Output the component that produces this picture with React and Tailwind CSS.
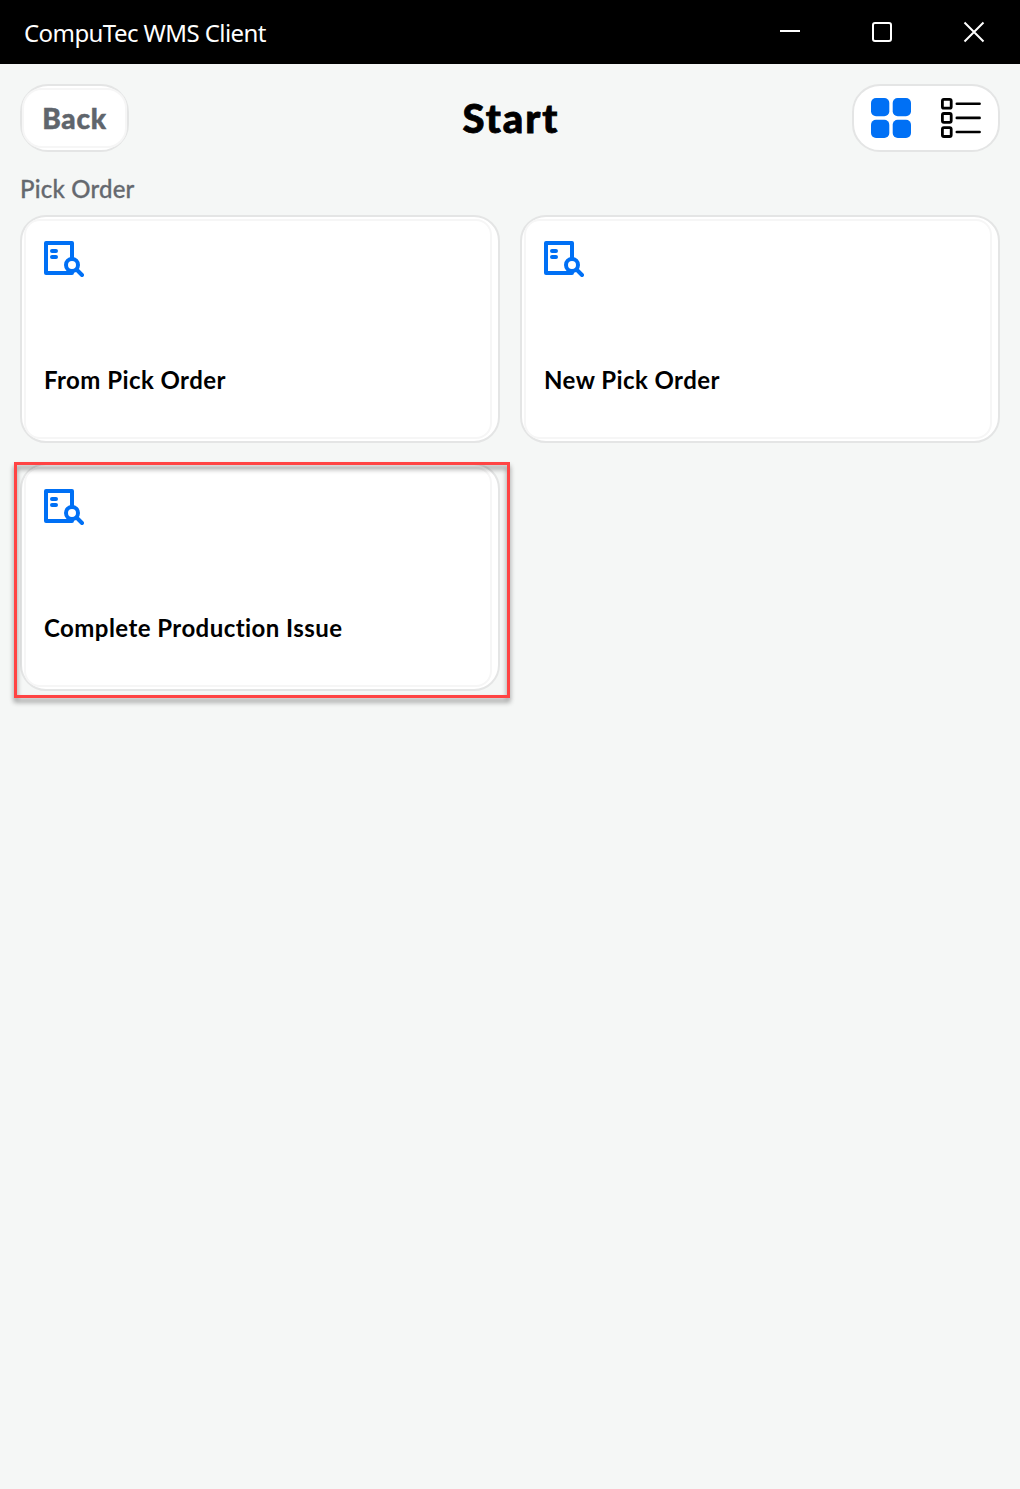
import React from "react";

function OrderIcon() {
  return (
    <svg className="block h-10 w-10" viewBox="0 0 40 40" fill="none" stroke="#0070f5" strokeWidth="4">
      <path d="M28 34H2V4h26v30Z" strokeLinejoin="round" />
      <path d="M8 12h4M8 18h4" strokeLinecap="round" />
      <circle cx="28" cy="26" r="6" fill="white" />
      <path d="M32.5 30.5 38 36" strokeLinecap="round" />
    </svg>
  );
}

function Card({ title, highlighted }) {
  return (
    <div className="relative h-[228px] rounded-[26px] border-2 border-[#e4e5e5] bg-white py-0.5 pr-1.5 pl-0.5">
      <div className="flex h-full flex-col rounded-[16px] border-2 border-[#f6f6f6] px-[18px] pt-[18px]">
        <OrderIcon />
        <h2 className="mt-[83px] text-[24px] leading-[36px] font-bold tracking-[0.44px] whitespace-nowrap text-black [font-variant-ligatures:none]">{title}</h2>
      </div>
      {highlighted && (
        <div className="absolute -top-[3px] -left-2 h-[236px] w-[496px] border-3 border-[#ff4444] [filter:drop-shadow(0_4px_2.5px_rgba(0,0,0,0.45))]" />
      )}
    </div>
  );
}

function TitleBar() {
  return (
    <header className="flex h-16 items-center justify-between bg-black pr-[34px] pl-6 text-white">
      <span className="pt-px font-['Noto_Sans',sans-serif] text-[24px] leading-8 tracking-[-0.57px]">CompuTec WMS Client</span>
      <div className="flex items-center gap-[68px]">
        <svg className="h-6 w-6" viewBox="0 0 24 24" stroke="white" strokeWidth="2"><path d="M2 11h20" /></svg>
        <svg className="h-6 w-6" viewBox="0 0 24 24" fill="none" stroke="white" strokeWidth="2"><rect x="3" y="3" width="18" height="18" rx="2" /></svg>
        <svg className="h-6 w-6" viewBox="0 0 24 24" stroke="white" strokeWidth="2"><path d="m2.5 2.5 19 19M21.5 2.5l-19 19" /></svg>
      </div>
    </header>
  );
}

function ViewToggle() {
  return (
    <div className="flex h-[68px] w-[148px] items-center justify-between rounded-[28px] border-2 border-[#e4e5e5] bg-white px-[17px]">
      <svg className="h-10 w-10" viewBox="0 0 40 40" fill="#0070f5">
        <rect width="18.3" height="18.3" rx="5" />
        <rect x="21.7" width="18.3" height="18.3" rx="5" />
        <rect y="21.7" width="18.3" height="18.3" rx="5" />
        <rect x="21.7" y="21.7" width="18.3" height="18.3" rx="5" />
      </svg>
      <svg className="h-10 w-10" viewBox="0 0 40 40" fill="none" stroke="black" strokeWidth="2.8">
        <rect x="1.4" y="1.4" width="8.8" height="8.8" rx="1.5" />
        <rect x="1.4" y="15.5" width="8.8" height="8.8" rx="1.5" />
        <rect x="1.4" y="29.7" width="8.8" height="8.8" rx="1.5" />
        <path d="M15.8 5.8h22.8M15.8 19.9h22.8M15.8 34h22.8" strokeLinecap="round" strokeWidth="2.6" />
      </svg>
    </div>
  );
}

export default function App() {
  return (
    <div className="min-h-screen bg-[#f5f7f6] font-['Lato',sans-serif]">
      <TitleBar />
      <main className="px-5 pt-5">
        <div className="grid grid-cols-[1fr_auto_1fr] items-center">
          <button className="h-[68px] w-[109px] rounded-[28px] border-2 border-[#e4e5e5] bg-white py-0.5">
            <span className="flex h-full items-center justify-center rounded-[20px] border-2 border-[#f6f6f6] text-[28px] leading-9 font-black tracking-[0.8px] text-[#5f656c] [-webkit-text-stroke:0.5px_#5f656c]">Back</span>
          </button>
          <h1 className="pl-0.5 text-[40px] leading-[52px] font-black tracking-[2px] text-black [-webkit-text-stroke:0.8px_black]">Start</h1>
          <div className="justify-self-end"><ViewToggle /></div>
        </div>
        <p className="mt-[21px] mb-[10px] text-[24px] leading-8 font-medium tracking-[0.2px] text-[#65696f] [-webkit-text-stroke:0.3px_#65696f]">Pick Order</p>
        <div className="grid grid-cols-2 gap-5">
          <Card title="From Pick Order" />
          <Card title="New Pick Order" />
          <Card title="Complete Production Issue" highlighted />
        </div>
      </main>
    </div>
  );
}
